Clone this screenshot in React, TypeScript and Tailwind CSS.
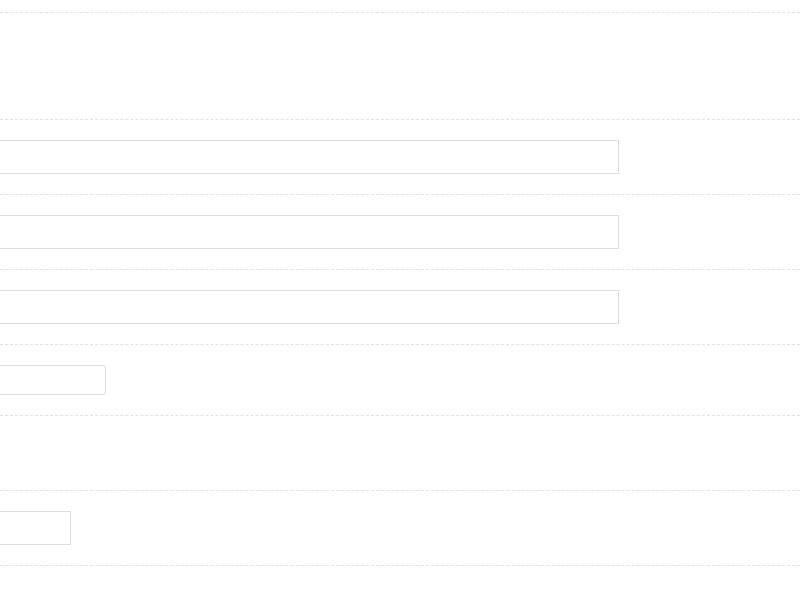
export default function App() {
  const line = "border-b border-dashed border-[#e3e3e3]";
  return (
    <div className="w-[800px] h-[600px] bg-white overflow-hidden" style={{ fontFamily: '"Liberation Sans", Arial, sans-serif' }}>
      <div className={`h-[13px] ${line}`} />
      <div className={`h-[107px] ${line}`} />
      {[0, 1, 2].map((i) => (
        <div key={i} className={`h-[75px] flex items-center ${line}`}>
          <div className="-ml-[20px] w-[639px] h-[34px] border border-[#dedede] bg-white" />
        </div>
      ))}
      <div className={`h-[71px] flex items-center ${line}`}>
        <div className="-ml-[20px] w-[126px] h-[30px] border border-[#dedede] rounded-[3px] bg-white" />
      </div>
      <div className={`h-[75px] ${line}`} />
      <div className={`h-[75px] flex items-center ${line}`}>
        <div className="-ml-[20px] w-[91px] h-[34px] border border-[#dedede] bg-white" />
      </div>
    </div>
  );
}
